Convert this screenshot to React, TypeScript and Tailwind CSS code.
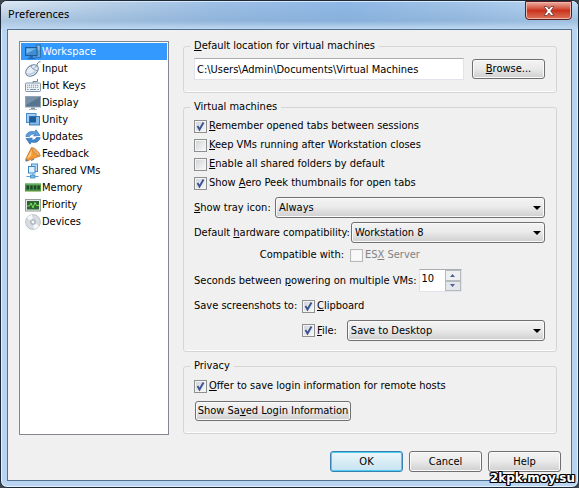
import { useState } from 'react';
import type { ReactNode } from 'react';
import clsx from 'clsx';

const buttonStyle =
  'rounded-[3px] border border-[#707070] bg-linear-to-b from-[#f3f3f3] via-[#ebebeb] via-45% to-[#cfcfcf] text-center shadow-[inset_0_0_0_1px_#fafafa]';

function WorkspaceIcon() {
  return (
    <svg viewBox="0 0 16 16" className="h-4 w-4">
      <rect x="11" y="1" width="4.500" height="12.500" fill="#5fa0d8" stroke="#2f689f" strokeWidth=".8" />
      <path d="M12.200 3h2.300M12.200 5h2.300" stroke="#d7ebfa" strokeWidth=".8" />
      <rect x=".5" y="3.500" width="11.500" height="8" fill="#3f8fd2" stroke="#1f5b97" />
      <path d="M1.500 4.500h9.500l-9.500 5z" fill="#7cbcec" />
      <path d="M4.500 12h3.500v2H4.500z" fill="#2b6aa8" />
      <path d="M2.500 14.500h8" stroke="#2b6aa8" strokeWidth="1.200" />
    </svg>
  );
}

function InputIcon() {
  return (
    <svg viewBox="0 0 16 16" className="h-4 w-4">
      <path d="M12 4.500c0-2 1-3.500 3.500-4" fill="none" stroke="#71879c" />
      <ellipse cx="7" cy="9.500" rx="7" ry="4.800" transform="rotate(-38 7 9.500)" fill="#e8eff6" stroke="#64809b" />
      <path d="M6 5c1 2.500 2.500 4 6 4.500M9 7.500l2.800-3" fill="none" stroke="#6c8aa8" strokeWidth=".9" />
      <path d="M2.500 12.500c2 1.500 5.500 0 7.500-2" fill="none" stroke="#b4c9dc" strokeWidth="1.400" />
    </svg>
  );
}

function KeyboardIcon() {
  return (
    <svg viewBox="0 0 16 16" className="h-4 w-4">
      <path d="M8 5V3.500h4.500V1" fill="none" stroke="#71879c" />
      <rect x=".5" y="5" width="15" height="8.500" rx=".8" fill="#eef3f7" stroke="#7f96ab" />
      <path d="M2 7.200h12M2 9.200h12" stroke="#7d95ab" strokeWidth="1.100" strokeDasharray="1.200 .8" />
      <path d="M2 11.500h1.500M5 11.500h6M12.500 11.500H14" stroke="#7d95ab" strokeWidth="1.100" />
    </svg>
  );
}

function DisplayIcon() {
  return (
    <svg viewBox="0 0 16 16" className="h-4 w-4">
      <rect x=".5" y="1.500" width="15" height="10.500" fill="#57758f" stroke="#93a5b5" />
      <path d="M1 2h14L1 10z" fill="#7590a8" />
      <path d="M6 12.500h4v1.500H6z" fill="#8598a9" />
      <path d="M4 14.500h8" stroke="#a7b6c3" />
    </svg>
  );
}

function UnityIcon() {
  return (
    <svg viewBox="0 0 16 16" className="h-4 w-4">
      <rect x="1.500" y="1.500" width="9.500" height="9" fill="#a3cdf0" stroke="#4a8ccb" />
      <rect x="4.500" y="4.500" width="10" height="8.500" fill="#83bae8" stroke="#3b7fc0" />
      <rect x="4.500" y="4.500" width="6.500" height="6" fill="#1d5c9c" />
    </svg>
  );
}

function UpdatesIcon() {
  return (
    <svg viewBox="0 0 16 16" className="h-4 w-4">
      <path d="M.8 7.500C1.500 3.500 5.500 1.500 9.500 3L11 .8l4 5.700-6.500.5 1.500-1.500C7.500 4.500 5.500 5.500 4.500 7.500z" fill="#5b9fe0" stroke="#2867ab" strokeWidth=".6" />
      <path d="M15.200 8.500c-.7 4-4.700 6-8.700 4.500L5 15.200 1 9.500l6.500-.5L6 10.500c2.500 1 4.500 0 5.500-2z" fill="#4388cf" stroke="#2867ab" strokeWidth=".6" />
    </svg>
  );
}

function FeedbackIcon() {
  return (
    <svg viewBox="0 0 16 16" className="h-4 w-4">
      <path d="M6.500 1.500C10 2.500 13.500 6 15 10L3 14.500 1 12.500z" fill="#f39a35" stroke="#c56b18" strokeWidth=".7" />
      <path d="M7 3.500l-5 9 4-2.500z" fill="#ffd08a" />
      <ellipse cx="11" cy="6" rx="1.800" ry="5.600" transform="rotate(-45 11 6)" fill="#eda95c" stroke="#b8743a" strokeWidth=".6" />
      <path d="M.5 12.500l3 2.500-3 .5z" fill="#5d6b78" />
      <path d="M6 14.500l3-1.500" stroke="#6f7c88" strokeWidth="1.300" />
    </svg>
  );
}

function SharedIcon() {
  return (
    <svg viewBox="0 0 16 16" className="h-4 w-4">
      <rect x="6.500" y="1" width="6" height="7.500" fill="#b8dcf5" stroke="#4590ca" />
      <rect x="3.500" y="3.500" width="6.500" height="6.500" fill="#e2f2fd" stroke="#3a86c4" />
      <path d="M8 10.500V13M1.500 13.500h12" stroke="#5aa0d5" strokeWidth="1.200" />
      <rect x="5.500" y="12" width="4.500" height="3" fill="#79b9e7" stroke="#3a86c4" strokeWidth=".7" />
    </svg>
  );
}

function MemoryIcon() {
  return (
    <svg viewBox="0 0 16 16" className="h-4 w-4">
      <rect x="0" y="3.500" width="16" height="8" fill="#4c9a4c" />
      <path d="M0 4h16" stroke="#7ab873" />
      <path d="M1.500 5.500h2.500v4H1.500zM5.200 5.500h2.500v4H5.200zM8.800 5.500h2.500v4H8.800zM12.400 5.500h2.500v4h-2.500z" fill="#1e4a28" />
      <path d="M0 11.500h16" stroke="#b9c07b" strokeDasharray="1 .6" />
    </svg>
  );
}

function PriorityIcon() {
  return (
    <svg viewBox="0 0 16 16" className="h-4 w-4">
      <rect x=".5" y="2.500" width="15" height="11.500" fill="#dfe5e0" stroke="#94a198" />
      <rect x="2" y="4" width="12" height="8.500" fill="#2d6433" />
      <path d="M2 9h2.500l1.500-3 2 5 2-5.500 1.500 3H14" fill="none" stroke="#79e05d" />
    </svg>
  );
}

function DevicesIcon() {
  return (
    <svg viewBox="0 0 16 16" className="h-4 w-4">
      <circle cx="8" cy="8" r="7.400" fill="#d9dde2" stroke="#adb5bd" strokeWidth=".8" />
      <path d="M8 8L2 4a7 7 0 0 1 5-3.200zM8 8l6 4a7 7 0 0 1-5 3.200z" fill="#f6f8fa" />
      <circle cx="8" cy="8" r="2.600" fill="#c3ccd4" stroke="#9aa5af" strokeWidth=".6" />
      <circle cx="8" cy="8" r="1.100" fill="#fff" />
    </svg>
  );
}

const pages = [
  { name: 'Workspace', icon: WorkspaceIcon },
  { name: 'Input', icon: InputIcon },
  { name: 'Hot Keys', icon: KeyboardIcon },
  { name: 'Display', icon: DisplayIcon },
  { name: 'Unity', icon: UnityIcon },
  { name: 'Updates', icon: UpdatesIcon },
  { name: 'Feedback', icon: FeedbackIcon },
  { name: 'Shared VMs', icon: SharedIcon },
  { name: 'Memory', icon: MemoryIcon },
  { name: 'Priority', icon: PriorityIcon },
  { name: 'Devices', icon: DevicesIcon },
];

function Group({ title, className, children }: { title: ReactNode; className?: string; children: ReactNode }) {
  return (
    <fieldset className="min-w-0 rounded-[3px] border border-[#d5d5d5] pr-[11px] pl-2.5 shadow-[inset_0_-1px_0_#fcfcfc]">
      <legend className="-ml-1 h-4 px-1 leading-4">{title}</legend>
      <div className={className}>{children}</div>
    </fieldset>
  );
}

function Check({ children, checked = false, disabled = false }: { children: ReactNode; checked?: boolean; disabled?: boolean }) {
  return (
    <label className={clsx('flex items-center gap-0.5', disabled && 'text-[#838383]')}>
      <span className="grid h-[13px] w-[13px] shrink-0">
        <input
          type="checkbox"
          defaultChecked={checked}
          disabled={disabled}
          className="peer col-start-1 row-start-1 h-[13px] w-[13px] appearance-none border border-[#8e8f8f] bg-linear-to-br from-[#cfd2d6] to-[#fafafa] shadow-[inset_0_0_0_1px_#f4f4f4] disabled:border-[#b9b9b9] disabled:from-[#f8f8f8]"
        />
        <svg viewBox="0 0 13 13" className="pointer-events-none invisible col-start-1 row-start-1 peer-checked:visible">
          <path d="M3.500 6l2 3.500 4-7" fill="none" stroke="#3c5494" strokeWidth="1.900" />
        </svg>
      </span>
      <span>{children}</span>
    </label>
  );
}

function Select({ id, label, options }: { id: string; label: string; options: string[] }) {
  return (
    <span className="grid min-w-0 flex-1">
      <select id={id} aria-label={label} className={clsx(buttonStyle, 'col-start-1 row-start-1 h-[21px] appearance-none pr-5 pl-[3px] text-left')}>
        {options.map((o) => (
          <option key={o}>{o}</option>
        ))}
      </select>
      <svg viewBox="0 0 8 4" className="pointer-events-none col-start-1 row-start-1 mr-1 h-1 w-2 self-center justify-self-end">
        <path d="M0 0h8L4 4z" fill="#000" />
      </svg>
    </span>
  );
}

export default function App() {
  const [page, setPage] = useState('Workspace');
  const [seconds, setSeconds] = useState(10);

  return (
    <div className="relative flex min-h-screen flex-col bg-[#40464d] font-['DejaVu_Sans_Condensed','DejaVu_Sans',sans-serif] text-[11px] leading-4 text-black">
      <div className="flex flex-1 flex-col rounded-[7px] border border-[#1b2938] bg-[#b9d4f0] px-1.5 pb-1.5 shadow-[inset_0_0_0_1px_#e4f0fb]">
        <header className="-mx-1.5 flex h-7 items-start justify-between rounded-t-[6px] border-t border-[#d9e9f9] bg-[linear-gradient(180deg,#b9d2ec00_0%,#82a9cf80_70%,#bfd8f1_100%),linear-gradient(90deg,#dbe7f3_0%,#b9d0e8_18%,#9dbfe6_38%,#8fb8e7_60%,#a2c4e8_80%,#bcd7f2_100%)] pr-1.5 pl-[7px]">
          <h1 className="pt-0.5 font-['Noto_Sans',sans-serif] leading-5">Preferences</h1>
          <button
            type="button"
            aria-label="Close"
            className="-mt-px flex h-[19px] w-[47px] items-center justify-center rounded-b-[4px] border border-[#5c1d1f] bg-linear-to-b from-[#eaaea3] via-[#c9311b] via-50% to-[#dc7158] shadow-[inset_0_0_0_1px_#f0b8ac]"
          >
            <svg viewBox="0 0 12 10" className="h-2.5 w-3">
              <path d="M1 .5h3L6 3 8 .5h3L7.700 5 11 9.500H8L6 7 4 9.500H1L4.300 5z" fill="#fff" stroke="#6b3a3b" strokeWidth=".8" />
            </svg>
          </button>
        </header>

        <main className="flex flex-1 flex-col border border-[#52708f] bg-[#f0f0f0] pr-2.5 pb-2 pl-[11px]">
          <div className="flex flex-1 gap-3.5">
            <ul className="mt-[11px] w-[150px] shrink-0 border border-[#828790] bg-white py-px">
              {pages.map(({ name, icon: Icon }) => (
                <li key={name} className="px-px">
                  <button
                    type="button"
                    onClick={() => setPage(name)}
                    className={clsx('flex h-[17px] w-full items-center gap-px pl-1 text-left leading-[17px]', page === name && 'bg-[#3399ff] text-white')}
                  >
                    <Icon />
                    {name}
                  </button>
                </li>
              ))}
            </ul>

            <div className="mt-2 mr-1 flex min-w-0 flex-1 flex-col gap-1.5">
              <Group title={<label htmlFor="location"><u>D</u>efault location for virtual machines</label>} className="flex items-center gap-2 pt-1 pb-3">
                <input
                  id="location"
                  type="text"
                  defaultValue="C:\Users\Admin\Documents\Virtual Machines"
                  className="h-[22px] min-w-0 flex-1 border border-[#e2e3ea] border-t-[#abadb3] bg-white px-0.5"
                />
                <button type="button" className={clsx(buttonStyle, 'h-5 w-[73px]')}>
                  <u>B</u>rowse...
                </button>
              </Group>

              <Group title="Virtual machines" className="flex flex-col pt-[3px] pb-2.5">
                <div className="flex flex-col gap-[3px]">
                  <Check checked><u>R</u>emember opened tabs between sessions</Check>
                  <Check><u>K</u>eep VMs running after Workstation closes</Check>
                  <Check><u>E</u>nable all shared folders by default</Check>
                  <Check checked>Show <u>A</u>ero Peek thumbnails for open tabs</Check>
                </div>
                <div className="mt-1.5 flex items-center gap-1.5">
                  <label htmlFor="tray" className="w-[75px] whitespace-nowrap"><u>S</u>how tray icon:</label>
                  <Select id="tray" label="Show tray icon" options={['Always', 'When a virtual machine is powered on', 'Never']} />
                </div>
                <div className="mt-1 flex items-center gap-0.5">
                  <label htmlFor="hardware" className="w-[155px] whitespace-nowrap">Default <u>h</u>ardware compatibility:</label>
                  <Select id="hardware" label="Default hardware compatibility" options={['Workstation 8', 'Workstation 7', 'Workstation 6.5']} />
                </div>
                <div className="mt-1 flex items-center gap-1.5">
                  <span className="w-[150px] text-right">Compatible with:</span>
                  <Check disabled>ES<u>X</u> Server</Check>
                </div>
                <div className="mt-1.5 flex items-center gap-0.5">
                  <label htmlFor="seconds" className="whitespace-nowrap">Seconds between <u>p</u>owering on multiple VMs:</label>
                  <span className="flex h-[23px] w-[43px] border border-[#e2e3ea] border-t-[#abadb3] bg-white">
                    <input
                      id="seconds"
                      type="text"
                      value={seconds}
                      onChange={(e) => setSeconds(Number(e.target.value) || 0)}
                      className="min-w-0 flex-1 pb-1 pl-0.5"
                    />
                    <span className="flex w-4 flex-col">
                      <button type="button" aria-label="Increase" onClick={() => setSeconds(seconds + 1)} className="flex flex-1 items-center justify-center border border-[#b5b9c0] bg-[#eeeff1]">
                        <svg viewBox="0 0 5 3" className="h-[3px] w-[5px]"><path d="M0 3h5L2.500 0z" fill="#4b5f91" /></svg>
                      </button>
                      <button type="button" aria-label="Decrease" onClick={() => setSeconds(seconds - 1)} className="flex flex-1 items-center justify-center border border-[#b5b9c0] bg-[#e4e6ea]">
                        <svg viewBox="0 0 5 3" className="h-[3px] w-[5px]"><path d="M0 0h5L2.500 3z" fill="#4b5f91" /></svg>
                      </button>
                    </span>
                  </span>
                </div>
                <div className="mt-1.5 flex gap-1.5">
                  <span className="w-[102px] whitespace-nowrap">Save screenshots to:</span>
                  <div className="flex min-w-0 flex-1 flex-col gap-1.5">
                    <Check checked><u>C</u>lipboard</Check>
                    <div className="flex items-center gap-2.5">
                      <Check checked><u>F</u>ile:</Check>
                      <Select id="file" label="Screenshot folder" options={['Save to Desktop', 'Browse for custom location']} />
                    </div>
                  </div>
                </div>
              </Group>

              <Group title="Privacy" className="flex flex-col items-start gap-[7px] pt-1 pb-3">
                <Check checked><u>O</u>ffer to save login information for remote hosts</Check>
                <button type="button" className={clsx(buttonStyle, 'ml-px h-5 w-[156px] whitespace-nowrap')}>
                  Show Sa<u>v</u>ed Login Information
                </button>
              </Group>
            </div>
          </div>

          <footer className="mt-4 flex justify-end gap-1.5">
            <button
              type="button"
              className="h-[21px] w-[73px] rounded-[3px] border border-[#3c7fb1] bg-linear-to-b from-[#eef6fa] to-[#c5e3f2] shadow-[inset_0_0_0_1px_#48cdf3]"
            >
              OK
            </button>
            <button type="button" className={clsx(buttonStyle, 'h-[21px] w-[73px]')}>Cancel</button>
            <button type="button" className={clsx(buttonStyle, 'h-[21px] w-[73px]')}>Help</button>
          </footer>
        </main>
      </div>

      <span className="absolute right-1 bottom-0.5 font-['DejaVu_Sans',sans-serif] text-[12px] font-bold text-white [text-shadow:-1px_-1px_#000,1px_-1px_#000,-1px_1px_#000,1px_1px_#000,0_-1px_#000,0_1px_#000,-1px_0_#000,1px_0_#000]">
        2kpk.moy.su
      </span>
    </div>
  );
}
